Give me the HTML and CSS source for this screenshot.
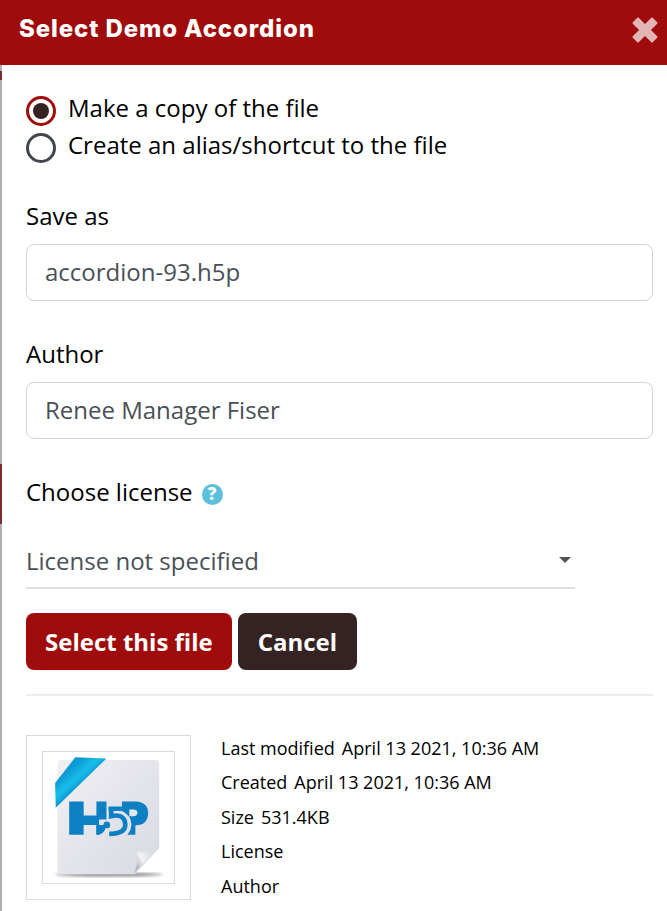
FILE: index.html
```html
<!DOCTYPE html>
<html lang="en">
<head>
  <meta charset="UTF-8" />
  <meta name="viewport" content="width=device-width, initial-scale=1.0"/>
  <title>Select Demo Accordion</title>
  <link rel="stylesheet" href="styles.css">
</head>
<body>
  <div class="backdrop">
    <div class="strip strip-head"></div>
    <div class="strip strip-grey-top"></div>
    <div class="strip strip-red-a"></div>
    <div class="strip strip-grey-a"></div>
    <div class="strip strip-red-b"></div>
    <div class="strip strip-grey-b"></div>
  </div>
  <div class="dialog">
    <div class="dialog-head">
      <h2>Select Demo Accordion</h2>
      <svg class="close-icon" viewBox="0 0 26 26" aria-label="Close">
        <path d="M6 1.5 L13 8.5 L20 1.5 L24.5 6 L17.5 13 L24.5 20 L20 24.5 L13 17.5 L6 24.5 L1.5 20 L8.5 13 L1.5 6 Z" />
      </svg>
    </div>
    <div class="dialog-body">
      <div class="radios">
        <label class="radio-row"><span class="radio checked"></span>Make a copy of the file</label>
        <label class="radio-row"><span class="radio"></span>Create an alias/shortcut to the file</label>
      </div>
      <div class="field field-save">
        <div class="field-label">Save as</div>
        <div class="text-input">accordion-93.h5p</div>
      </div>
      <div class="field field-author">
        <div class="field-label">Author</div>
        <div class="text-input">Renee Manager Fiser</div>
      </div>
      <div class="license-label">
        Choose license
        <span class="help-icon">?</span>
      </div>
      <div class="select-box">
        <span>License not specified</span>
        <span class="caret"></span>
      </div>
      <div class="buttons">
        <button class="btn btn-primary">Select this file</button>
        <button class="btn btn-dark">Cancel</button>
      </div>
      <div class="file-info">
        <div class="thumb-outer">
          <div class="thumb-inner">
            <svg class="h5p-icon" viewBox="9 6 390 390">
              <defs>
                <linearGradient id="sheet" x1="0" y1="0" x2="1" y2="1">
                  <stop offset="0" stop-color="#f0f0f4"/>
                  <stop offset="1" stop-color="#d8dae2"/>
                </linearGradient>
                <linearGradient id="ribbon" gradientUnits="userSpaceOnUse" x1="90" y1="55" x2="135" y2="105">
                  <stop offset="0" stop-color="#0d9ad4"/>
                  <stop offset="0.5" stop-color="#16bde8"/>
                  <stop offset="1" stop-color="#0b8cc6"/>
                </linearGradient>
                <linearGradient id="fold" gradientUnits="userSpaceOnUse" x1="285" y1="340" x2="330" y2="310">
                  <stop offset="0" stop-color="#b9bac1"/>
                  <stop offset="0.45" stop-color="#f4f4f6"/>
                  <stop offset="1" stop-color="#dcdde2"/>
                </linearGradient>
                <filter id="soft"><feGaussianBlur stdDeviation="1.6"/></filter>
                <filter id="shadow"><feGaussianBlur stdDeviation="5"/></filter>
              </defs>
              <ellipse cx="205" cy="371" rx="160" ry="6" fill="#8a8a8a" filter="url(#shadow)"/>
              <g filter="url(#soft)">
                <path d="M64 30 H343 a12 12 0 0 1 12 12 V292 L282 370 H64 a12 12 0 0 1 -12 -12 V42 a12 12 0 0 1 12 -12 Z" fill="url(#sheet)"/>
                <path d="M105 22 L198 25 L47 172 L45 98 Z" fill="url(#ribbon)"/>
                <path d="M87 153 H130 V195 H168 V153 H198 V207 H176 V252 H168 V223 H130 V252 H87 Z" fill="#0f80c4"/>
                <path d="M168 223 H194 V236 Q190 248 176 252 H168 Z" fill="#0f80c4"/>
                <circle cx="199" cy="223" r="10" fill="#0f80c4"/>
                <path d="M204 175 H244 M212 175 V197 Q252 188 254 222 Q254 250 206 250" fill="none" stroke="#0f80c4" stroke-width="14"/>
                <path d="M244 153 H285 Q322 155 322 187 Q322 224 285 224 H284 V252 H260 Q272 240 272 222 Q272 195 244 182 Z" fill="#0f80c4"/>
                <path d="M266 177 H278 Q290 177 290 187 Q290 197 278 197 H266 Z" fill="#e6e7ed"/>
                <path d="M350 290 Q315 310 288 303 Q294 335 280 368 Z" fill="url(#fold)"/>
              </g>
            </svg>
          </div>
        </div>
        <div class="meta">
          <div class="meta-row"><span>Last modified</span><span>April 13 2021, 10:36 AM</span></div>
          <div class="meta-row"><span>Created</span><span>April 13 2021, 10:36 AM</span></div>
          <div class="meta-row"><span>Size</span><span>531.4KB</span></div>
          <div class="meta-row"><span>License</span></div>
          <div class="meta-row"><span>Author</span></div>
        </div>
      </div>
    </div>
  </div>
</body>
</html>
```

FILE: styles.css
```css
html, body {
  height: 100%;
}
body {
  margin: 0;
  display: flex;
  overflow: hidden;
  background: #fff;
  color: #000;
  font-family: 'Open Sans', sans-serif;
}
.backdrop {
  width: 2px;
  flex: none;
  display: flex;
  flex-direction: column;
}
.strip-head { height: 65px; background: #a00b0b; }
.strip-grey-top { height: 6px; background: #adb0b3; }
.strip-red-a { height: 9px; background: #7d2a30; }
.strip-grey-a { height: 384px; background: #adb0b3; }
.strip-red-b { height: 60px; background: #7d2a30; }
.strip-grey-b { flex: 1; background: #adb0b3; }

.dialog {
  flex: 1;
  min-width: 0;
}
.dialog-head {
  height: 65px;
  background: #a00b0b;
  display: flex;
  align-items: center;
  justify-content: space-between;
  padding: 0 9px 6px 17px;
  box-sizing: border-box;
}
.dialog-head h2 {
  margin: 0 0 2px;
  color: #fff;
  font-family: 'Inter', sans-serif;
  font-size: 24px;
  font-weight: 800;
  letter-spacing: 0.9px;
}
.close-icon {
  width: 26px;
  height: 26px;
}
.close-icon path {
  fill: #e3b5b5;
  stroke: #e3b5b5;
  stroke-width: 2;
  stroke-linejoin: round;
}
.dialog-body {
  padding: 24px 14px 0 24px;
}
.radios {
  font-size: 24px;
}
.radio-row {
  display: flex;
  align-items: center;
  gap: 12px;
  height: 37px;
}
.radio {
  width: 30px;
  height: 30px;
  margin-top: 6px;
  border-radius: 50%;
  border: 3px solid #40464b;
  box-sizing: border-box;
  display: flex;
  align-items: center;
  justify-content: center;
}
.radio.checked {
  border-color: #a00b0b;
}
.radio.checked::after {
  content: "";
  width: 16px;
  height: 16px;
  border-radius: 50%;
  background: #352323;
}
.field-label {
  font-size: 24px;
  line-height: 30px;
  margin-bottom: 13px;
}
.field-save { margin-top: 38px; }
.field-author { margin-top: 38px; }
.text-input {
  height: 57px;
  box-sizing: border-box;
  border: 1px solid #ced4da;
  border-radius: 8px;
  padding: 0 18px 2px;
  display: flex;
  align-items: center;
  font-size: 24px;
  color: #495057;
}
.license-label {
  margin-top: 38px;
  font-size: 24px;
  line-height: 30px;
  display: flex;
  align-items: center;
  gap: 9px;
}
.help-icon {
  width: 21px;
  height: 21px;
  margin-top: 4px;
  border-radius: 50%;
  background: #5bc0de;
  color: #fff;
  font-size: 17px;
  font-weight: 800;
  display: flex;
  align-items: center;
  justify-content: center;
}
.select-box {
  width: 549px;
  height: 54px;
  margin-top: 28px;
  box-sizing: border-box;
  border-bottom: 2px solid #dedede;
  display: flex;
  align-items: center;
  justify-content: space-between;
  font-size: 24px;
  color: #495057;
  padding: 0 4px 2px 0;
}
.caret {
  width: 0;
  height: 0;
  border-left: 6px solid transparent;
  border-right: 6px solid transparent;
  border-top: 6px solid #555;
}
.buttons {
  display: flex;
  gap: 6px;
  margin-top: 24px;
}
.btn {
  height: 57px;
  border: none;
  border-radius: 8px;
  color: #fff;
  font-family: 'Open Sans', sans-serif;
  font-size: 24px;
  font-weight: 700;
  padding: 0 19px;
}
.btn-primary { background: #a00b0b; }
.btn-dark { background: #352323; padding: 0 20px; }
.file-info {
  margin-top: 24px;
  border-top: 2px solid #ececec;
  padding-top: 39px;
  display: flex;
  gap: 30px;
}
.thumb-outer {
  width: 165px;
  height: 165px;
  flex: none;
  box-sizing: border-box;
  border: 1px solid #dadada;
  display: flex;
  align-items: center;
  justify-content: center;
}
.thumb-inner {
  width: 133px;
  height: 133px;
  box-sizing: border-box;
  border: 1px solid #dadada;
  display: flex;
}
.h5p-icon {
  width: 131px;
  height: 131px;
}
.meta {
  font-size: 18px;
  margin-top: -4.3px;
}
.meta-row {
  display: flex;
  gap: 7px;
  height: 34.5px;
  align-items: center;
}
```
